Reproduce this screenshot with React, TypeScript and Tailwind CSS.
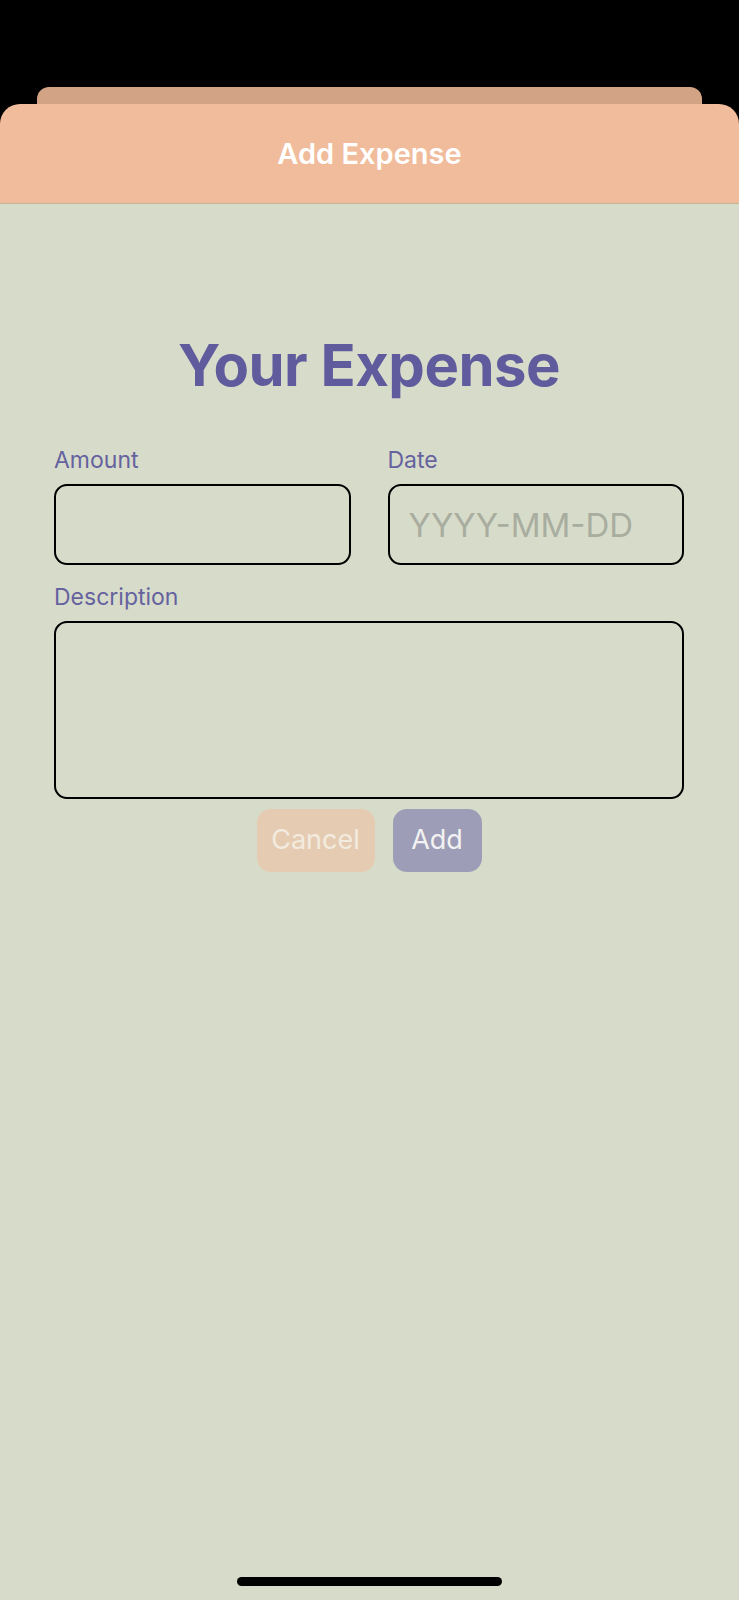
import React from "react";

export default function App() {
  const font = { fontFamily: "Inter, 'Noto Sans', sans-serif" };
  return (
    <div className="relative flex h-[1600px] w-[739px] flex-col bg-black" style={font}>
      <div className="h-[87px] shrink-0" />
      <div className="mx-[37px] h-[17px] shrink-0 rounded-t-[12px] bg-[#d3a386]" />
      <div className="flex flex-1 flex-col overflow-hidden rounded-t-[20px] bg-[#f0bc9b]">
        <div className="flex h-[100px] shrink-0 items-center justify-center border-b border-[#c6b596]">
          <span className="text-[29px] font-semibold leading-[30px] text-white">Add Expense</span>
        </div>
        <div className="flex flex-1 flex-col bg-[#d7dcca] pl-[54px] pr-[55px] pt-[132px]">
          <h1 className="text-center text-[58px] font-bold leading-[58px] tracking-[-0.5px] text-[#5f5b9c]">
            Your Expense
          </h1>
          <div className="mt-[55px] grid grid-cols-2 gap-x-[37px]">
            <div className="flex flex-col">
              <label className="text-[23px] leading-[22px] text-[#65629f]">Amount</label>
              <input
                className="mt-[13px] h-[81px] w-full rounded-[13px] border-2 border-black bg-transparent px-[20px] text-[33px] outline-none"
                type="text"
              />
            </div>
            <div className="flex flex-col">
              <label className="text-[23px] leading-[22px] text-[#65629f]">Date</label>
              <input
                className="mt-[13px] h-[81px] w-full rounded-[13px] border-2 border-black bg-transparent px-[19px] text-[33px] text-black outline-none placeholder:text-[#a9ad9f]"
                type="text"
                placeholder="YYYY-MM-DD"
              />
            </div>
          </div>
          <label className="mt-[21px] text-[23px] leading-[22px] text-[#65629f]">Description</label>
          <textarea className="mt-[13px] h-[178px] w-full resize-none rounded-[13px] border-2 border-black bg-transparent px-[20px] py-[12px] text-[28px] outline-none" />
          <div className="mt-[10px] flex justify-center gap-[18px]">
            <button className="flex h-[63px] w-[118px] items-center justify-center rounded-[14px] bg-[#e5cbb1] text-[27px] text-[#f3ebe0]">
              Cancel
            </button>
            <button className="flex h-[63px] w-[89px] items-center justify-center rounded-[14px] bg-[#9d9db7] text-[27px] text-[#f2f2f2]">
              Add
            </button>
          </div>
        </div>
      </div>
      <div className="absolute bottom-[14px] left-[237px] h-[9px] w-[265px] rounded-full bg-black" />
    </div>
  );
}
